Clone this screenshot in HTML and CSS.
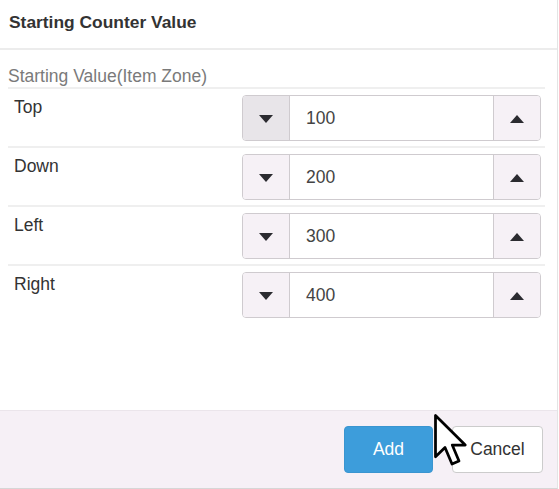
FILE: index.html
```html
<!DOCTYPE html>
<html>
<head>
<meta charset="utf-8">
<link rel="stylesheet" href="styles.css">
</head>
<body>
<div class="dialog">
  <div class="header"><h1 class="title">Starting Counter Value</h1></div>
  <div class="body">
    <div class="section">Starting Value(Item Zone)</div>
    <div class="row">
      <div class="label">Top</div>
      <div class="spinner">
        <div class="btn down active"><span class="tri-down"></span></div>
        <div class="value">100</div>
        <div class="btn up"><span class="tri-up"></span></div>
      </div>
    </div>
    <div class="row">
      <div class="label">Down</div>
      <div class="spinner">
        <div class="btn down"><span class="tri-down"></span></div>
        <div class="value">200</div>
        <div class="btn up"><span class="tri-up"></span></div>
      </div>
    </div>
    <div class="row">
      <div class="label">Left</div>
      <div class="spinner">
        <div class="btn down"><span class="tri-down"></span></div>
        <div class="value">300</div>
        <div class="btn up"><span class="tri-up"></span></div>
      </div>
    </div>
    <div class="row last">
      <div class="label">Right</div>
      <div class="spinner">
        <div class="btn down"><span class="tri-down"></span></div>
        <div class="value">400</div>
        <div class="btn up"><span class="tri-up"></span></div>
      </div>
    </div>
  </div>
  <div class="footer">
    <button class="primary">Add</button>
    <button class="secondary">Cancel</button>
  </div>
</div>
<svg class="cursor" width="40" height="60" viewBox="0 0 16 24">
  <path d="M1 1 L1 17.5 L4.8 13.8 L7.6 20.4 L10.4 19.2 L7.7 12.8 L12.9 12.8 Z" fill="#fff" stroke="#000" stroke-width="1.1" stroke-linejoin="round"/>
</svg>
</body>
</html>
```

FILE: styles.css
```css
html, body {
  margin: 0;
  padding: 0;
  background: #fff;
}
body {
  font-family: "Liberation Sans", Arial, sans-serif;
  width: 559px;
  height: 489px;
  overflow: hidden;
  position: relative;
}
.dialog {
  width: 557px;
  height: 488px;
  border-right: 1px solid #e4e4e4;
  border-bottom: 1px solid #d6d6d6;
  display: flex;
  flex-direction: column;
}
.header {
  height: 48px;
  border-bottom: 2px solid #ececec;
  display: flex;
  align-items: center;
  padding-left: 9px;
}
.title {
  margin: 0;
  font-size: 17.4px;
  font-weight: bold;
  color: #333;
  position: relative;
  top: -2px;
}
.body {
  flex: 1;
  padding: 0 12px 0 8px;
}
.section {
  color: #7a7a7a;
  font-size: 17.5px;
  padding-top: 16px;
  height: 21px;
  line-height: 21px;
  border-bottom: 2px solid #efefef;
}
.row {
  display: flex;
  justify-content: space-between;
  align-items: flex-start;
  padding: 6px 4px 5px 6px;
  border-bottom: 2px solid #efefef;
}
.row.last {
  border-bottom: none;
}
.label {
  font-size: 17.5px;
  color: #333;
  padding-top: 2px;
}
.spinner {
  width: 297px;
  height: 44px;
  border: 1px solid #cfcbcf;
  border-radius: 4px;
  display: flex;
  overflow: hidden;
}
.btn {
  width: 46px;
  background: #f6f1f6;
  display: flex;
  align-items: center;
  justify-content: center;
}
.btn.down {
  border-right: 1px solid #cfcbcf;
}
.btn.up {
  border-left: 1px solid #cfcbcf;
}
.btn.active {
  background: #e8e5e9;
}
.value {
  flex: 1;
  display: flex;
  align-items: center;
  padding-left: 16px;
  font-size: 17.5px;
  color: #444;
  background: #fff;
}
.tri-down {
  width: 0;
  height: 0;
  border-left: 7px solid transparent;
  border-right: 7px solid transparent;
  border-top: 8px solid #2b2b30;
  margin-top: 2px;
}
.tri-up {
  width: 0;
  height: 0;
  border-left: 7px solid transparent;
  border-right: 7px solid transparent;
  border-bottom: 8px solid #2b2b30;
  margin-top: 2px;
}
.footer {
  height: 78px;
  background: #f6f0f6;
  border-top: 1px solid #ebe5eb;
  display: flex;
  align-items: flex-start;
  justify-content: flex-end;
  gap: 19px;
  padding: 15px 14px 0 0;
  box-sizing: border-box;
}
.footer button {
  height: 47px;
  font-family: "Liberation Sans", Arial, sans-serif;
  font-size: 17.5px;
  border-radius: 4px;
  padding: 0;
}
.primary {
  width: 89px;
  background: #3d9ddb;
  border: 1px solid #3a95d0;
  color: #fff;
}
.secondary {
  width: 91px;
  background: #fff;
  border: 1px solid #cccccc;
  color: #333;
}
.cursor {
  position: absolute;
  left: 433px;
  top: 413px;
}
```
